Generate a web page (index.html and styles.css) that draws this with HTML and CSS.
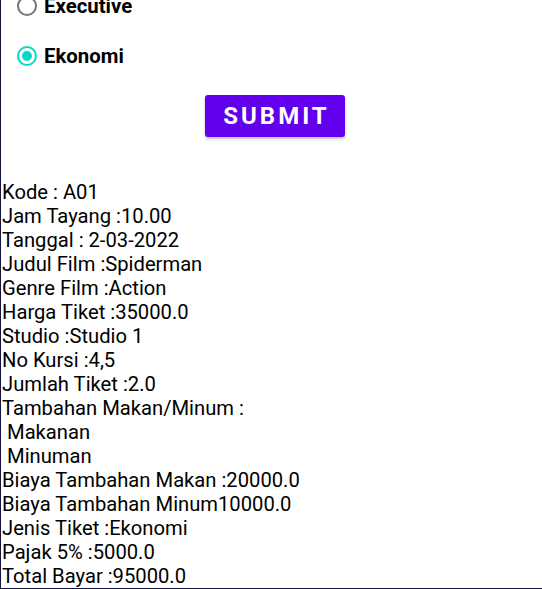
FILE: index.html
```html
<!DOCTYPE html>
<html>
<head>
<meta charset="utf-8">
<link rel="stylesheet" href="styles.css">
</head>
<body>
<div class="screen">
  <div class="radios">
    <div class="radio-row">
      <span class="radio"></span>
      <span class="radio-label">Executive</span>
    </div>
    <div class="radio-row">
      <span class="radio checked"></span>
      <span class="radio-label">Ekonomi</span>
    </div>
  </div>
  <div class="actions">
    <button class="submit">SUBMIT</button>
  </div>
  <div class="result">
    <div class="line">Kode : A01</div>
    <div class="line">Jam Tayang :10.00</div>
    <div class="line">Tanggal : 2-03-2022</div>
    <div class="line">Judul Film :Spiderman</div>
    <div class="line">Genre Film :Action</div>
    <div class="line">Harga Tiket :35000.0</div>
    <div class="line">Studio :Studio 1</div>
    <div class="line">No Kursi :4,5</div>
    <div class="line">Jumlah Tiket :2.0</div>
    <div class="line">Tambahan Makan/Minum :</div>
    <div class="line"> Makanan</div>
    <div class="line"> Minuman</div>
    <div class="line">Biaya Tambahan Makan :20000.0</div>
    <div class="line">Biaya Tambahan Minum10000.0</div>
    <div class="line">Jenis Tiket :Ekonomi</div>
    <div class="line">Pajak 5% :5000.0</div>
    <div class="line">Total Bayar :95000.0</div>
  </div>
</div>
</body>
</html>
```
FILE: styles.css
```css
html, body {
  margin: 0;
  padding: 0;
  background: #ffffff;
}
.screen {
  width: 542px;
  height: 589px;
  box-sizing: border-box;
  border-left: 1px solid #14143c;
  border-bottom: 1px solid #14143c;
  overflow: hidden;
  font-family: Roboto, "Liberation Sans", sans-serif;
  color: #000;
}
.radios {
  margin-top: -19px;
  display: flex;
  flex-direction: column;
}
.radio-row {
  height: 50px;
  display: flex;
  align-items: center;
  padding-left: 16px;
}
.radio {
  width: 20px;
  height: 20px;
  box-sizing: border-box;
  border: 2px solid #757575;
  border-radius: 50%;
  display: flex;
  align-items: center;
  justify-content: center;
}
.radio.checked {
  border-color: #03dac5;
}
.radio.checked::after {
  content: "";
  width: 10px;
  height: 10px;
  border-radius: 50%;
  background: #03dac5;
}
.radio-label {
  margin-left: 7px;
  font-weight: 700;
  font-size: 20.4px;
}
.actions {
  display: flex;
  justify-content: center;
  margin-top: 14px;
  padding-left: 7px;
}
.submit {
  width: 140px;
  height: 42px;
  border: none;
  border-radius: 3px;
  background: #6200ee;
  color: #fff;
  font-family: Roboto, "Liberation Sans", sans-serif;
  font-weight: 700;
  font-size: 24px;
  letter-spacing: 3px;
  padding: 0 0 0 3px;
  box-shadow: 0 2px 3px rgba(0,0,0,0.25);
}
.result {
  margin-top: 43px;
  padding-left: 1px;
  font-size: 20.2px;
  line-height: 24px;
}
.line {
  white-space: pre;
}
```
